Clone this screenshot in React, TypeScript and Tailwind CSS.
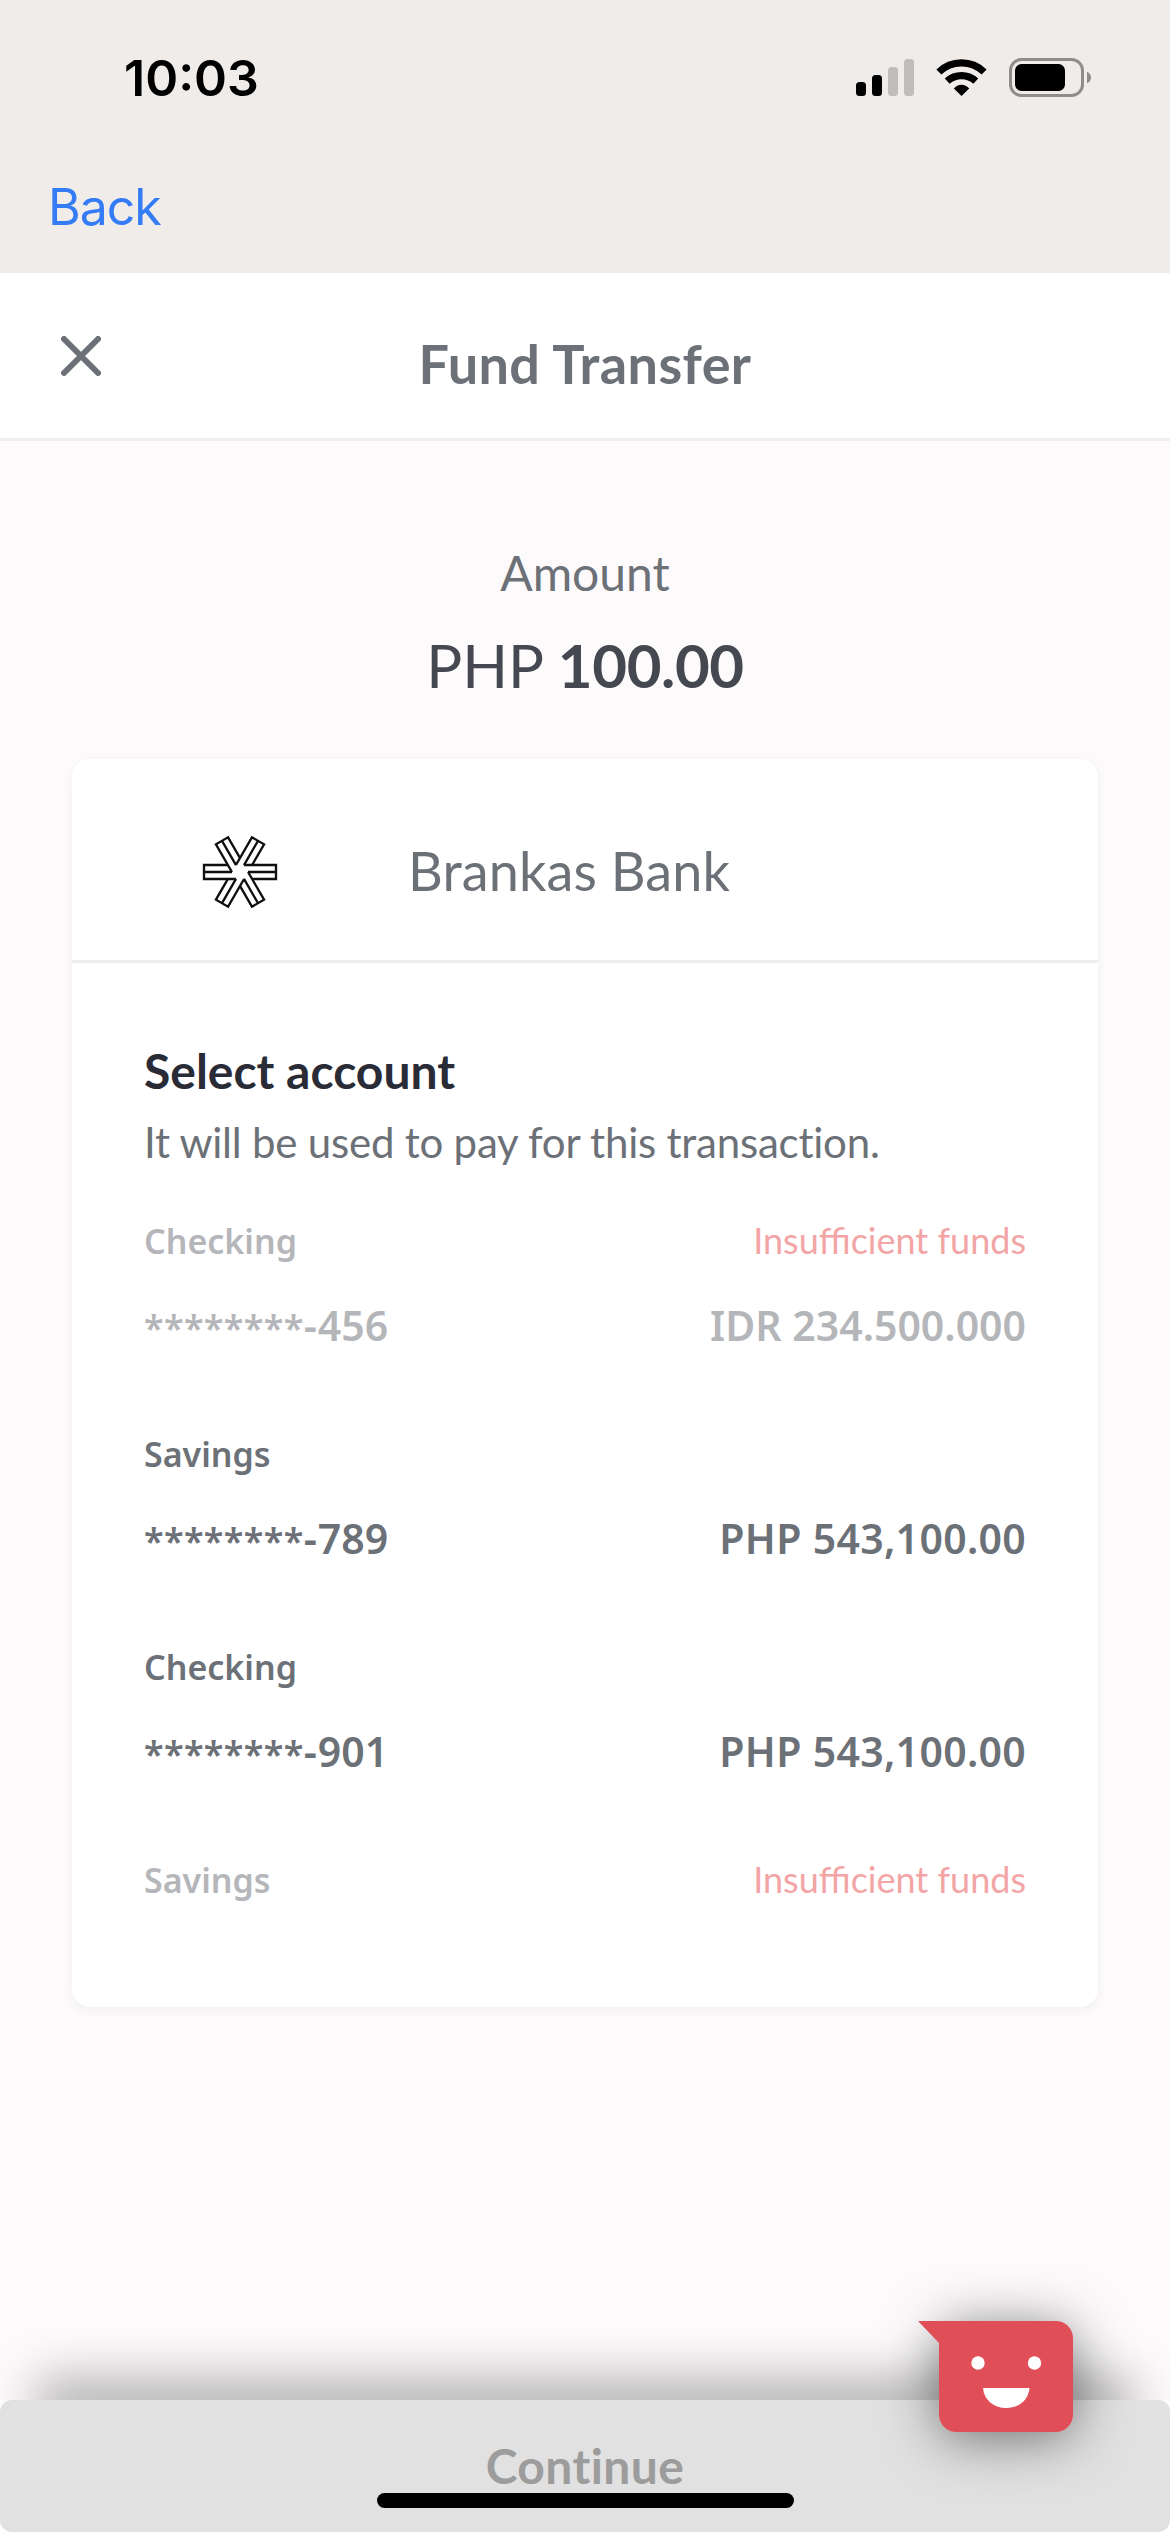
import React from "react";

type Account = {
  kind: string;
  digits?: string;
  balance?: string;
  insufficient?: boolean;
};

const accounts: Account[] = [
  { kind: "Checking", digits: "456", balance: "IDR 234.500.000", insufficient: true },
  { kind: "Savings", digits: "789", balance: "PHP 543,100.00" },
  { kind: "Checking", digits: "901", balance: "PHP 543,100.00" },
  { kind: "Savings", insufficient: true },
];

function SignalIcon() {
  return (
    <svg width="58" height="37" viewBox="0 0 58 37">
      <rect x="0" y="23" width="10" height="14" rx="3.5" fill="#000" />
      <rect x="16" y="16" width="10" height="21" rx="3.5" fill="#000" />
      <rect x="32" y="8" width="10" height="29" rx="3.5" fill="#bebdbc" />
      <rect x="48" y="0" width="10" height="37" rx="3.5" fill="#bebdbc" />
    </svg>
  );
}

function WifiIcon() {
  return (
    <svg width="51" height="37" viewBox="0 0 51 37" fill="none" stroke="#000">
      <path d="M2.9 13 A32.5 32.5 0 0 1 48.1 13" strokeWidth="7.2" />
      <path d="M11.2 22.1 A21.3 21.3 0 0 1 39.8 22.1" strokeWidth="7.2" />
      <path d="M25.5 37 L17.8 29.4 A10 10 0 0 1 33.2 29.4 Z" fill="#000" stroke="none" />
    </svg>
  );
}

function BatteryIcon() {
  return (
    <svg width="82" height="39" viewBox="0 0 82 39">
      <rect x="1.5" y="1.5" width="72" height="36" rx="11" fill="none" stroke="#8f8d8c" strokeWidth="3" />
      <rect x="6" y="6" width="50" height="27" rx="6.5" fill="#000" />
      <path d="M78 13.7 C80.5 14.7 82 16.8 82 19.5 C82 22.2 80.5 24.3 78 25.3 Z" fill="#8f8d8c" />
    </svg>
  );
}

function BrankasLogo() {
  return (
    <svg width="76" height="76" viewBox="-114 -114 228 228" fill="none" stroke="#0f0f0f" strokeWidth="7">
      {[0, 60, 120, 180, 240, 300].map((a) => (
        <path key={a} transform={`rotate(${a})`} d="M-12 21 H-108 V-21 H-36 M-108 0 H-24" />
      ))}
    </svg>
  );
}

function ChatBubble() {
  return (
    <div className="absolute right-[97px] top-[2321px] h-[111px] w-[134px] rounded-[17px] shadow-[0_6px_54px_rgba(0,0,0,0.5)]">
      <svg className="absolute right-0 top-0" width="155" height="111" viewBox="0 0 155 111">
        <path d="M0 0 H138 A17 17 0 0 1 155 17 V94 A17 17 0 0 1 138 111 H38 A17 17 0 0 1 21 94 V22 Z" fill="#e04f58" />
        <circle cx="60" cy="42" r="6.7" fill="#fff" />
        <circle cx="116.5" cy="42" r="6.7" fill="#fff" />
        <path d="M65 67 H111.500 C110.500 79 101 87 88.200 87 C75.500 87 66 79 65 67 Z" fill="#fff" />
      </svg>
    </div>
  );
}

function AccountRow({ account }: { account: Account }) {
  const tone = account.insufficient ? "text-[#b5b6ba]" : "text-[#6c7077]";
  const tracking = account.insufficient ? "" : "tracking-[0.3px]";
  return (
    <li className={tone}>
      <div className="flex h-12 justify-between leading-[48px]">
        <span className="mt-px font-['Noto_Sans',sans-serif] text-[34px] font-semibold">{account.kind}</span>
        {account.insufficient && <span className="text-[36px] text-[#f3a5a6]">Insufficient funds</span>}
      </div>
      {account.digits && (
        <div className="mt-[37px] flex h-12 justify-between font-['Noto_Sans',sans-serif] text-[41px] font-semibold leading-[48px]">
          <span>
            <span className="text-[36px] tracking-[0.3px]">********</span>
            <span className="tracking-[1px]">-</span>
            {account.digits}
          </span>
          <span className={tracking}>{account.balance}</span>
        </div>
      )}
    </li>
  );
}

export default function App() {
  return (
    <div className="relative flex h-[2532px] w-[1170px] flex-col overflow-hidden bg-[#fcfafb] font-[Lato,sans-serif] text-[#6c7077]">
      <div className="h-[273px] shrink-0 bg-[#f0ece9] font-[Inter,sans-serif]">
        <div className="flex items-start justify-between pl-[124px] pr-[79px] pt-12">
          <span className="text-[50px] font-semibold leading-[60px] text-black">10:03</span>
          <div className="flex items-center gap-[22px] pt-[10px]">
            <SignalIcon />
            <WifiIcon />
            <BatteryIcon />
          </div>
        </div>
        <a className="ml-12 mt-[69px] inline-block text-[50px] leading-[60px] tracking-[-1px] text-[#347bf6]">Back</a>
      </div>

      <header className="grid h-[168px] shrink-0 grid-cols-[1fr_auto_1fr] items-start border-b-[3px] border-[#eeeeee] bg-white pt-[60px]">
        <svg className="ml-[61px] mt-[3px]" width="40" height="40" viewBox="0 0 40 40" fill="none" stroke="#6c7077" strokeWidth="6" strokeLinecap="round">
          <path d="M3 3 L37 37 M37 3 L3 37" />
        </svg>
        <h1 className="mt-px text-[54px] font-bold leading-[60px] tracking-[0.4px]">Fund Transfer</h1>
      </header>

      <main className="px-[72px] pt-[102px]">
        <div className="text-center">
          <p className="text-[48px] leading-[60px]">Amount</p>
          <p className="mt-[26px] text-[60px] leading-[72px] text-[#464851]">
            PHP <b className="font-bold tracking-[-0.4px]">100.00</b>
          </p>
        </div>

        <section className="mt-[58px] h-[1248px] rounded-[18px] bg-white shadow-[0_3px_12px_rgba(0,0,0,0.05)]">
          <div className="flex h-[204px] items-start border-b-[3px] border-[#eeeeee] pl-[130px] pt-[75px]">
            <BrankasLogo />
            <span className="ml-[130px] mt-[7px] text-[54px] leading-[60px] tracking-[0.1px]">Brankas Bank</span>
          </div>
          <div className="px-[72px] pt-[78px]">
            <h2 className="text-[48px] font-bold leading-[60px] text-[#292b36]">Select account</h2>
            <p className="mt-[14px] text-[42px] leading-[54px] tracking-[-0.22px] [font-variant-ligatures:none]">
              It will be used to pay for this transaction.
            </p>
            <ul className="mt-[47px] flex flex-col gap-20">
              {accounts.map((account, i) => (
                <AccountRow key={i} account={account} />
              ))}
            </ul>
          </div>
        </section>
      </main>

      <footer className="absolute inset-x-0 bottom-0 bg-white">
        <button className="block h-[132px] w-full rounded-[12px] bg-[#e1e1e1] text-[48px] font-bold tracking-[0.4px] text-[#9c9c9c] shadow-[0_-60px_48px_-36px_rgba(0,0,0,0.27)] [font-variant-ligatures:none]">
          Continue
        </button>
        <div className="absolute bottom-6 left-[377px] h-[15px] w-[417px] rounded-full bg-black" />
      </footer>

      <ChatBubble />
    </div>
  );
}
